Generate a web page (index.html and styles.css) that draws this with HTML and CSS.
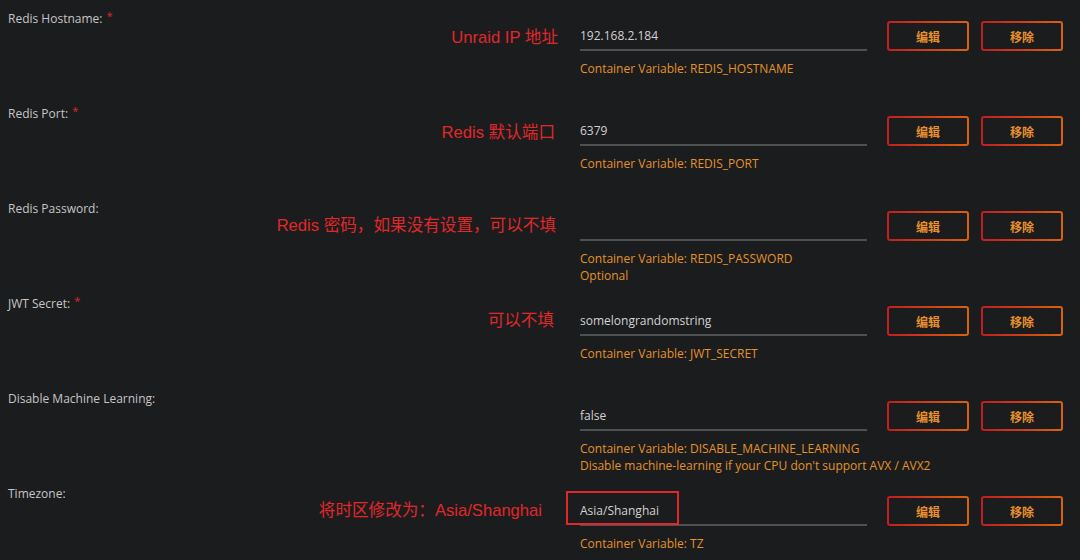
FILE: index.html
```html
<!DOCTYPE html>
<html>
<head>
<meta charset="utf-8">
<link rel="stylesheet" href="styles.css">
</head>
<body>
<div class="form">
  <div class="row">
    <div class="left">
      <div class="label">Redis Hostname:<span class="req">*</span></div>
      <div class="note">Unraid IP 地址</div>
    </div>
    <div class="field">
      <div class="input">192.168.2.184</div>
      <div class="desc">Container Variable: REDIS_HOSTNAME</div>
    </div>
    <button class="btn">编辑</button>
    <button class="btn">移除</button>
  </div>
  <div class="row">
    <div class="left">
      <div class="label">Redis Port:<span class="req">*</span></div>
      <div class="note note-r3">Redis 默认端口</div>
    </div>
    <div class="field">
      <div class="input">6379</div>
      <div class="desc">Container Variable: REDIS_PORT</div>
    </div>
    <button class="btn">编辑</button>
    <button class="btn">移除</button>
  </div>
  <div class="row">
    <div class="left">
      <div class="label">Redis Password:</div>
      <div class="note note-r2 note-up">Redis 密码，如果没有设置，可以不填</div>
    </div>
    <div class="field">
      <div class="input"></div>
      <div class="desc">Container Variable: REDIS_PASSWORD<br>Optional</div>
    </div>
    <button class="btn">编辑</button>
    <button class="btn">移除</button>
  </div>
  <div class="row">
    <div class="left">
      <div class="label">JWT Secret:<span class="req">*</span></div>
      <div class="note note-r4 note-up">可以不填</div>
    </div>
    <div class="field">
      <div class="input">somelongrandomstring</div>
      <div class="desc">Container Variable: JWT_SECRET</div>
    </div>
    <button class="btn">编辑</button>
    <button class="btn">移除</button>
  </div>
  <div class="row">
    <div class="left">
      <div class="label">Disable Machine Learning:</div>
      <div class="note"></div>
    </div>
    <div class="field">
      <div class="input">false</div>
      <div class="desc">Container Variable: DISABLE_MACHINE_LEARNING<br>Disable machine-learning if your CPU don't support AVX / AVX2</div>
    </div>
    <button class="btn">编辑</button>
    <button class="btn">移除</button>
  </div>
  <div class="row">
    <div class="left">
      <div class="label">Timezone:</div>
      <div class="note note-r16 note-up">将时区修改为：Asia/Shanghai</div>
    </div>
    <div class="field">
      <div class="input">Asia/Shanghai<span class="highlight"></span></div>
      <div class="desc">Container Variable: TZ</div>
    </div>
    <button class="btn">编辑</button>
    <button class="btn">移除</button>
  </div>
</div>
</body>
</html>
```
FILE: styles.css
```css
html, body {
  margin: 0;
  padding: 0;
  background: #1b1c1e;
  height: 100%;
}
body {
  font-family: "Open Sans", "Noto Sans", sans-serif;
  font-size: 12px;
  color: #c9c9c9;
  overflow: hidden;
}
.form {
  padding-left: 8px;
}
.row {
  height: 95px;
  display: grid;
  grid-template-columns: 572px 287px 102px 94px;
  align-items: start;
}
.left {
  display: flex;
  flex-direction: column;
}
.label {
  padding-top: 12px;
  line-height: 14px;
  color: #c6c6c6;
}
.req {
  color: #e0262a;
  margin-left: 4px;
  font-size: 11px;
  position: relative;
  top: -3px;
}
.note {
  align-self: flex-end;
  margin-right: 22px;
  margin-top: 2px;
  font-family: "Liberation Sans", "Noto Sans CJK SC", sans-serif;
  font-size: 16.6px;
  line-height: 20px;
  color: #e0282a;
  min-height: 20px;
  white-space: nowrap;
}
.note-up {
  margin-top: 0;
}
.note-r2 { margin-right: 24px; }
.note-r3 { margin-right: 25px; }
.note-r4 { margin-right: 26px; }
.note-r16 { margin-right: 38px; }
.field {
  padding-top: 21px;
  white-space: nowrap;
}
.input {
  position: relative;
  height: 28px;
  line-height: 30px;
  border-bottom: 2px solid #4f5052;
  color: #d2d2d2;
  font-size: 12px;
}
.highlight {
  position: absolute;
  left: -14px;
  top: -5px;
  width: 109px;
  height: 30px;
  border: 2px solid #e3262a;
}
.desc {
  margin-top: 9px;
  line-height: 17px;
  color: #e3922c;
}
.btn {
  margin-top: 21px;
  margin-left: 20px;
  width: 82px;
  height: 30px;
  box-sizing: border-box;
  border: 2px solid transparent;
  border-radius: 3px;
  background:
    linear-gradient(#1b1c1e, #1b1c1e) padding-box,
    linear-gradient(90deg, #c21d22, #d9620f) border-box;
  color: #e8902e;
  font-family: "Noto Sans CJK SC", sans-serif;
  font-weight: bold;
  font-size: 12px;
  padding: 0;
}
.btn + .btn {
  margin-left: 12px;
}
```
